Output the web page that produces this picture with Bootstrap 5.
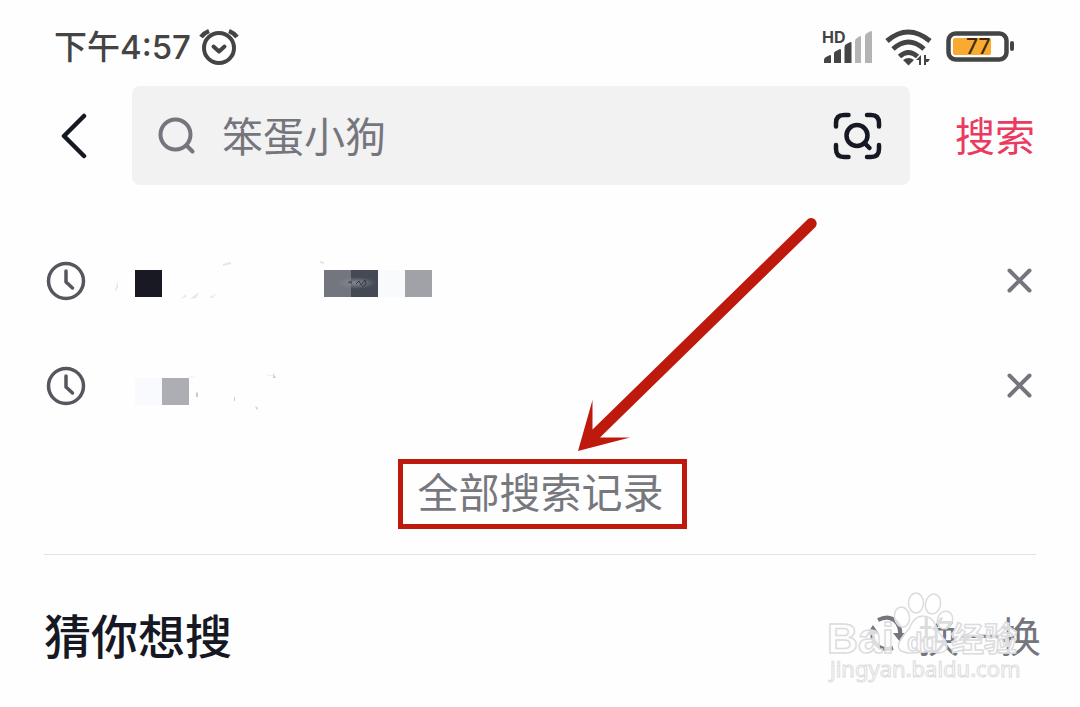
<!DOCTYPE html>
<html lang="zh-CN">
<head>
<meta charset="utf-8">
<meta name="viewport" content="width=device-width, initial-scale=1">
<title>搜索</title>
<link href="https://cdn.jsdelivr.net/npm/bootstrap@5.3.0/dist/css/bootstrap.min.css" rel="stylesheet">
<style>
body{background:#fefefe;color:#161823;font-family:"Noto Sans CJK SC",sans-serif}
svg{display:block;flex:none}
.page{padding:0 44px}
.status{height:86px;padding:8px 20px 0 10px;color:#444}
.clock-time{font-size:33px;line-height:40px;font-weight:500;font-family:Inter,"Noto Sans CJK SC",sans-serif}
.plain{border:0;background:none;padding:0;color:inherit}
.back{width:88px;height:98px;padding-left:16px}
.field{background:#f2f2f2;border-radius:8px;height:99px;padding:0 28px 0 26px}
.field input{font-size:41px;line-height:56px;padding-bottom:4px;color:#75767d;margin-left:26px;min-width:0}
.field input::placeholder{color:#75767d;opacity:1}
.go{font-size:40px;line-height:56px;padding-bottom:4px;color:#ea3a61;width:126px;padding-left:45px;white-space:nowrap}
.history{padding-top:43px}
.entry{height:105px;padding:0 4px 0 2px}
.entry a{margin-left:29px}
.all-records{border:5px solid #bd1a0d;height:70px;padding:0 18px 8px 15px;font-size:41px;line-height:52px;color:#77787e;margin-top:21px}
.pointer{position:absolute;left:calc(50% + 32px);bottom:74px;pointer-events:none}
.divider{height:1px;background:#e3e3e4;margin-top:25px}
.guess{padding-top:44px;padding-bottom:32px}
.guess h1{font-size:47px;line-height:70px;font-weight:500}
.refresh{font-size:41px;line-height:60px;color:#75767d;margin-right:-5px;gap:11px}
.watermark{position:absolute;right:10px;top:34px;pointer-events:none}
</style>
</head>
<body>
<main class="page">
  <header class="status d-flex justify-content-between align-items-center">
    <div class="d-flex align-items-center gap-2">
      <span class="clock-time">下午4:57</span>
      <svg width="40" height="38" viewBox="0 0 40 38" fill="none" stroke="#444" stroke-width="4" stroke-linecap="round" stroke-linejoin="round"><circle cx="20" cy="20" r="15"/><path d="M14.500 18.500l5.500 5 5.500-5"/><path d="M2 9q3-4 8-6M30 3q5 2 8 6" stroke-linecap="butt" stroke-width="4.500"/></svg>
    </div>
    <svg width="194" height="40" viewBox="0 0 194 40" fill="#444" role="img" aria-label="信号、无线网络、电量77%">
      <text x="0" y="16" font-family="Inter,sans-serif" font-size="16" font-weight="700">HD</text>
      <path d="M2 36v-3q0-2 2-3l4-2q1 0 1 1v7zM12 36V26q0-1 2-2l4-2q1 0 1 1v13zM22.500 36V20q0-2 2-3l4-2q1 0 1 1v20z"/><path d="M33 36V14q0-2 2-3l3-2q1 0 1 1v26zM43 36V9q0-2 2-3l4-2q1 0 1 1v31z" fill="#b4b4b4"/>
      <g fill="none" stroke="#444" stroke-width="5"><path d="M65 14q21-18 43 0M71 22q15.500-14 31 0M77.500 29.500q9-8 18 0"/></g>
      <path d="M81 33q5.500-4 11 0L86.500 38.500z"/>
      <path d="M94 33l5-5v10h-2v-5zM102 28h2v10h-2zM104 32h4l-2 3h-2z"/>
      <rect x="126.500" y="6.500" width="58" height="26" rx="7" fill="none" stroke="#444" stroke-width="4.500"/><rect x="131" y="11" width="38" height="17" rx="2" fill="#f8aa31"/><rect x="188" y="14" width="4" height="10" rx="2"/>
      <text x="144" y="27" font-family="Inter,sans-serif" font-size="21" font-weight="500" fill="#42290c">77</text>
    </svg>
  </header>

  <form class="d-flex align-items-center" role="search" onsubmit="return false">
    <button type="button" class="plain back" aria-label="返回"><svg width="28" height="46" viewBox="0 0 28 46" fill="none" stroke="#161823" stroke-width="4.500" stroke-linecap="round" stroke-linejoin="round"><path d="M24 3L4 23l20 20"/></svg></button>
    <div class="field d-flex align-items-center flex-grow-1">
      <svg width="38" height="38" viewBox="0 0 38 38" fill="none" stroke="#75767d" stroke-width="4" stroke-linecap="round"><circle cx="17.500" cy="17.500" r="15"/><path d="M28.500 28.500l6 6"/></svg>
      <input class="plain flex-grow-1" type="text" placeholder="笨蛋小狗" aria-label="搜索内容">
      <button type="button" class="plain" aria-label="识图搜索"><svg width="49" height="48" viewBox="0 0 49 48" fill="none" stroke="#161823" stroke-width="4.500" stroke-linecap="round"><path d="M3 14.500V11q0-8 8-8h4.500M34 3h4q8 0 8 8v3.500M46 33v4q0 8-8 8h-4M15.500 45H11q-8 0-8-8v-4"/><circle cx="24" cy="23.500" r="10.500"/><path d="M31.500 31l5 5"/></svg></button>
    </div>
    <button type="submit" class="plain go text-start">搜索</button>
  </form>

  <section class="history" aria-label="搜索历史">
    <div class="entry d-flex align-items-center">
      <svg width="40" height="40" viewBox="0 0 40 40" fill="none" stroke="#55565e" stroke-width="3.500" stroke-linecap="round" stroke-linejoin="round"><circle cx="20" cy="20" r="17.500"/><path d="M20 10v11l6.500 6"/></svg>
      <a href="#" aria-label="历史记录一"><svg width="324" height="54" viewBox="0 0 324 54">
        <defs><radialGradient id="smudge"><stop stop-color="#858990"/><stop offset="1" stop-color="#858990" stop-opacity="0"/></radialGradient></defs>
        <path d="M0 36l3-9v6l-3 5zM66 45l5-5v3zM75 45l9-7-3 6zM94 44l8-5-5 5z" fill="#e6e6e7"/><path d="M108 11l8-2M205 8l4 1" stroke="#e6e6e7" stroke-width="2"/>
        <path d="M20 16h27v27H20z" fill="#181923"/><path d="M209 16h27v27h-27z" fill="#73767e"/><path d="M236 16h27v27h-27z" fill="#454953"/><path d="M263 16h27v27h-27z" fill="#f9fafb"/><path d="M290 16h27v27h-27z" fill="#a1a2a8"/>
        <ellipse cx="241" cy="29" rx="20" ry="6" fill="url(#smudge)"/><path d="M233 29l3-2v3M241 30l3-3 2 4 4-5 1 4-4 3" fill="none" stroke="#353840"/>
      </svg></a>
      <button type="button" class="plain ms-auto" aria-label="删除"><svg width="25" height="25" viewBox="0 0 25 25" stroke="#75767d" stroke-width="4" stroke-linecap="round"><path d="M2.500 2.500l20 20M22.500 2.500l-20 20"/></svg></button>
    </div>
    <div class="entry d-flex align-items-center">
      <svg width="40" height="40" viewBox="0 0 40 40" fill="none" stroke="#55565e" stroke-width="3.500" stroke-linecap="round" stroke-linejoin="round"><circle cx="20" cy="20" r="17.500"/><path d="M20 10v11l6.500 6"/></svg>
      <a href="#" aria-label="历史记录二"><svg width="324" height="54" viewBox="0 0 324 54"><path d="M20 19h27v27H20z" fill="#f9fafd"/><path d="M47 19h27v27H47z" fill="#adaeb3"/><path d="M81 33l2 1v4h-2zM119 38h1v4h-1zM140 47l3 2-1 2zM158 14l3 5h-3zM164 22l6 1" fill="#ccc"/><path d="M74 18h6M152 16l7 1" stroke="#eee"/></svg></a>
      <button type="button" class="plain ms-auto" aria-label="删除"><svg width="25" height="25" viewBox="0 0 25 25" stroke="#75767d" stroke-width="4" stroke-linecap="round"><path d="M2.500 2.500l20 20M22.500 2.500l-20 20"/></svg></button>
    </div>
    <div class="position-relative d-flex justify-content-center ps-1">
      <button type="button" class="plain all-records">全部搜索记录</button>
      <svg class="pointer" width="250" height="240" viewBox="0 0 250 240" fill="#bd1a0d"><path d="M6 236L20.500 185V214.500L235.500 4.500A5.500 5.500 0 0 1 243.500 12L28 222.500 58 222.500z"/></svg>
    </div>
  </section>
  <div class="divider"></div>

  <section class="guess position-relative d-flex justify-content-between align-items-center">
    <h1 class="m-0">猜你想搜</h1>
    <button type="button" class="plain refresh d-flex align-items-center"><svg width="40" height="40" viewBox="0 0 40 40" fill="none" stroke="#75767d" stroke-width="4"><path d="M11 6q12-6 19 3 4 5 3 13M26 34q-11 3-17-4-5-6-3-13"/><path d="M26 19h13l-6 9zM0 20l6-9 6 9z" fill="#75767d" stroke="none"/></svg><span>换一换</span></button>
    <svg class="watermark" width="200" height="100" viewBox="0 0 200 100" fill="#fff" fill-opacity=".75" stroke="#dcdcde" stroke-width="1.500" aria-hidden="true">
      <text x="1" y="64" font-family="Liberation Sans,sans-serif" font-weight="700" font-size="43">Bai</text>
      <ellipse cx="90" cy="14" rx="7.500" ry="10"/><ellipse cx="107" cy="15" rx="7.500" ry="10" transform="rotate(12 107 15)"/><ellipse cx="76" cy="28" rx="7.500" ry="10" transform="rotate(-10 76 28)"/><ellipse cx="119" cy="31" rx="7.500" ry="9" transform="rotate(20 119 31)"/>
      <path d="M97 27q9 0 13 10 3 8 9 14 6 12-7 13-7-2-14-1-7 1-14 1-17-1-9-14 3-5 8-10 5-13 14-13z"/>
      <text x="81" y="62" font-family="Liberation Sans,sans-serif" font-weight="700" font-size="25">du</text>
      <text x="125" y="62" font-weight="700" font-size="33">经验</text>
      <text x="4" y="88" font-family="Noto Sans,sans-serif" font-size="22" fill-opacity="1" stroke-width="1">jingyan.baidu.com</text>
    </svg>
  </section>
</main>
<script src="https://cdn.jsdelivr.net/npm/bootstrap@5.3.0/dist/js/bootstrap.bundle.min.js"></script>
</body>
</html>
